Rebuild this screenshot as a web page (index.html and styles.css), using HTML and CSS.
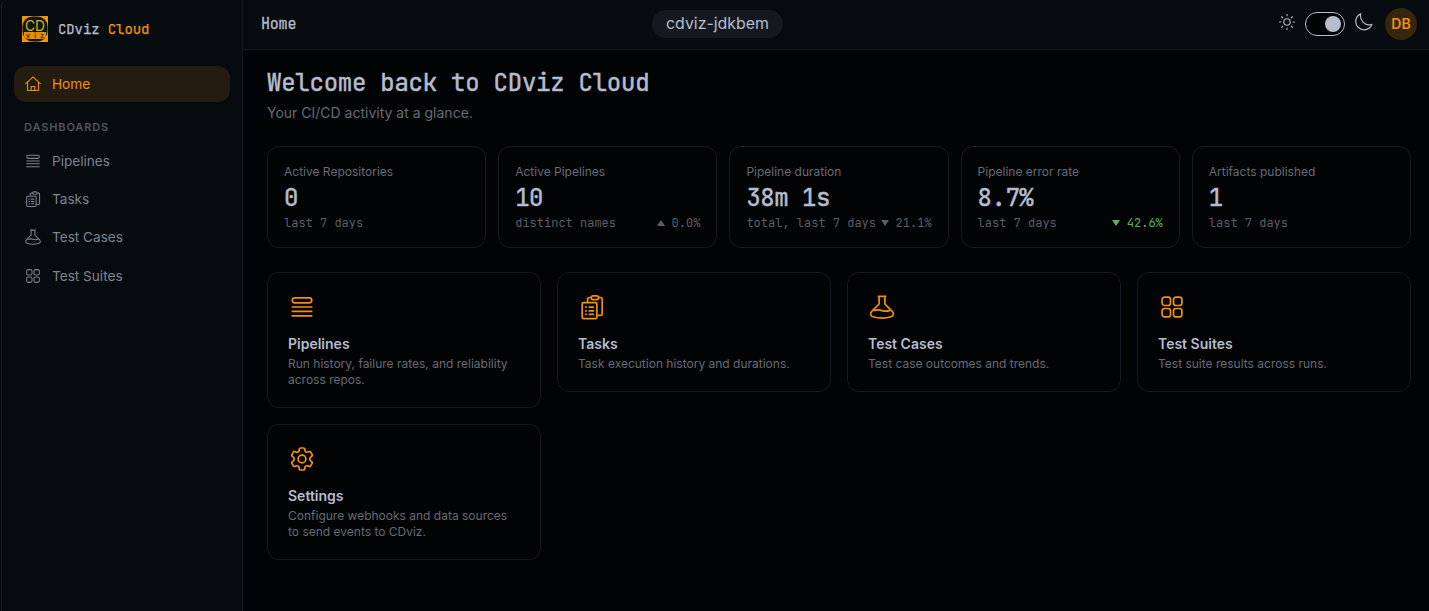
FILE: index.html
```html
<!DOCTYPE html>
<html lang="en">
<head>
    <meta charset="UTF-8">
    <meta name="viewport" content="width=device-width, initial-scale=1.0">
    <title>CDviz Cloud</title>
    <link rel="stylesheet" href="styles.css">
</head>
<body>
    <!-- shared icons -->
    <svg class="sprite" xmlns="http://www.w3.org/2000/svg">
        <symbol id="icon-home" viewBox="-1 -1 18 18">
            <path d="M.5 7.8 8 .9l7.5 6.9M2.5 6.5v8h11v-8M6.2 14.5v-4h3.6v4"/>
        </symbol>
        <symbol id="icon-pipelines" viewBox="0 0 28 28">
            <rect x="4.3" y="4.9" width="19.4" height="5" rx="2.3"/>
            <path d="M3.6 14h20.8M3.6 18.4h20.8M3.6 22.9h20.8"/>
        </symbol>
        <symbol id="icon-tasks" viewBox="0 0 28 28">
            <rect x="4.2" y="9.6" width="14.7" height="16" rx="1.3"/>
            <path d="M9.6 9.4V6.4q0-1.9 1.9-1.9h1.3M20.8 4.5h1.5q1.9 0 1.9 1.9v14.1q0 1.9-1.9 1.9h-3.2"/>
            <rect x="13.2" y="2.9" width="7.4" height="3.8" rx="1.9"/>
            <path d="M7.2 14.2h1.7M10.6 14.2h5.5M7.2 17.8h1.7M10.6 17.8h5.5M7.2 21.3h1.7M10.6 21.3h5.5"/>
        </symbol>
        <symbol id="icon-cases" viewBox="0 0 28 28">
            <path d="M9.7 3.3h8.6M11.1 3.6V11l-7.5 7.6c-1.6 1.8-1.2 4.4 1.3 5.2 5.8 1.8 12.4 1.8 18.2 0 2.5-.8 2.9-3.4 1.3-5.2L16.9 11V3.6"/>
            <path d="M6 17.8c3-1.3 5.700-1 8-.2s5.500.7 8-.2"/>
        </symbol>
        <symbol id="icon-suites" viewBox="0 0 28 28">
            <rect x="4.1" y="4.1" width="8.4" height="8.4" rx="2.5"/>
            <rect x="15.5" y="4.1" width="8.4" height="8.4" rx="2.5"/>
            <rect x="4.1" y="15.5" width="8.4" height="8.4" rx="2.5"/>
            <rect x="15.5" y="15.5" width="8.4" height="8.4" rx="2.5"/>
        </symbol>
        <symbol id="icon-settings" viewBox="0 0 28 28">
            <circle cx="14" cy="14" r="3.9"/>
            <path d="M12.3 3h3.4q.8 0 .9.8l.4 1.9q.2.9 1 1.3t1.7.1l1.6-.6q.8-.3 1.2.4l1.7 2.900q.4.7-.2 1.200l-1.300 1.200q-.9.7-.9 1.800t.9 1.800l1.300 1.200q.6.5.2 1.200l-1.700 2.900q-.4.7-1.200.4l-1.600-.6q-.9-.3-1.700.1t-1 1.300l-.4 1.900q-.1.8-.9.8h-3.400q-.8 0-.9-.8L11 22.300q-.2-.9-1-1.300t-1.700-.1l-1.600.6q-.8.3-1.200-.4l-1.700-2.900q-.4-.7.2-1.200l1.300-1.200q.9-.7.9-1.800t-.9-1.800L4 11q-.6-.5-.2-1.200l1.700-2.900q.4-.7 1.200-.4l1.600.6q.9.3 1.700-.1t1-1.300l.4-1.900q.1-.8.9-.8z"/>
        </symbol>
    </svg>

    <div class="app">
        <aside class="sidebar">
            <div class="brand">
                <svg class="logo" viewBox="0 0 26 26">
                    <rect width="26" height="26" fill="#f69400"/>
                    <rect x=".5" y=".5" width="25" height="25" rx="10" fill="#111510"/>
                    <path d="M2 16h22v5q-2 2-4 2H6q-2 0-4-2z" fill="#e58e04"/>
                    <text x="3" y="15" class="logo-cd" textLength="20" lengthAdjust="spacingAndGlyphs">CD</text>
                    <text x="4" y="21.5" class="logo-viz" textLength="18">viz</text>
                </svg>
                <span class="brand-name">CDviz <b>Cloud</b></span>
            </div>
            <nav class="nav">
                <a class="nav-item active"><svg class="nav-icon home-icon"><use href="#icon-home"/></svg>Home</a>
                <h2 class="nav-title">DASHBOARDS</h2>
                <a class="nav-item"><svg class="nav-icon"><use href="#icon-pipelines"/></svg>Pipelines</a>
                <a class="nav-item"><svg class="nav-icon"><use href="#icon-tasks"/></svg>Tasks</a>
                <a class="nav-item"><svg class="nav-icon"><use href="#icon-cases"/></svg>Test Cases</a>
                <a class="nav-item"><svg class="nav-icon"><use href="#icon-suites"/></svg>Test Suites</a>
            </nav>
        </aside>

        <div class="page">
            <header class="topbar">
                <span class="page-name">Home</span>
                <span class="workspace">cdviz-jdkbem</span>
                <div class="tools">
                    <svg class="sun" viewBox="0 0 16 16">
                        <circle cx="8" cy="8" r="3.2"/>
                        <path d="M8 0v2.3M8 13.7V16M0 8h2.3M13.7 8H16M2.3 2.3 4 4M12 12l1.7 1.7M2.3 13.7 4 12M12 4l1.7-1.7"/>
                    </svg>
                    <span class="switch"></span>
                    <svg class="moon" viewBox="0 0 18 18">
                        <path d="M5.7.9C4.4 6.8 9.3 13.3 16.8 11.5A8.3 8.3 0 1 1 5.7.9z"/>
                    </svg>
                    <span class="avatar">DB</span>
                </div>
            </header>

            <main class="content">
                <h1>Welcome back to CDviz Cloud</h1>
                <p class="subtitle">Your CI/CD activity at a glance.</p>

                <section class="stats">
                    <div class="stat">
                        <div class="stat-label">Active Repositories</div>
                        <div class="stat-value">0</div>
                        <div class="stat-note"><span>last 7 days</span></div>
                    </div>
                    <div class="stat">
                        <div class="stat-label">Active Pipelines</div>
                        <div class="stat-value">10</div>
                        <div class="stat-note"><span>distinct names</span><span class="trend up">0.0%</span></div>
                    </div>
                    <div class="stat">
                        <div class="stat-label">Pipeline duration</div>
                        <div class="stat-value">38m 1s</div>
                        <div class="stat-note"><span>total, last 7 days</span><span class="trend down">21.1%</span></div>
                    </div>
                    <div class="stat">
                        <div class="stat-label">Pipeline error rate</div>
                        <div class="stat-value">8.7%</div>
                        <div class="stat-note"><span>last 7 days</span><span class="trend down good">42.6%</span></div>
                    </div>
                    <div class="stat">
                        <div class="stat-label">Artifacts published</div>
                        <div class="stat-value">1</div>
                        <div class="stat-note"><span>last 7 days</span></div>
                    </div>
                </section>

                <section class="cards">
                    <a class="card">
                        <svg class="card-icon"><use href="#icon-pipelines"/></svg>
                        <h3>Pipelines</h3>
                        <p>Run history, failure rates, and reliability across repos.</p>
                    </a>
                    <a class="card">
                        <svg class="card-icon"><use href="#icon-tasks"/></svg>
                        <h3>Tasks</h3>
                        <p>Task execution history and durations.</p>
                    </a>
                    <a class="card">
                        <svg class="card-icon"><use href="#icon-cases"/></svg>
                        <h3>Test Cases</h3>
                        <p>Test case outcomes and trends.</p>
                    </a>
                    <a class="card">
                        <svg class="card-icon"><use href="#icon-suites"/></svg>
                        <h3>Test Suites</h3>
                        <p>Test suite results across runs.</p>
                    </a>
                    <a class="card">
                        <svg class="card-icon"><use href="#icon-settings"/></svg>
                        <h3>Settings</h3>
                        <p>Configure webhooks and data sources to send events to CDviz.</p>
                    </a>
                </section>
            </main>
        </div>
    </div>
</body>
</html>
```
FILE: styles.css
```css
:root {
    --bg: #020305;
    --panel: #060b0f;
    --border: #161a20;
    --text: #b5bdcc;
    --muted: #666b73;
    --dim: #5a5f66;
    --accent: #f29009;
    --mono: "JetBrains Mono", "DejaVu Sans Mono", monospace;
}

* {
    box-sizing: border-box;
}

body {
    margin: 0;
    background: var(--panel);
    color: var(--text);
    font-family: Inter, sans-serif;
    font-size: 14px;
}

h1, h2, h3, p {
    margin: 0;
}

svg {
    fill: none;
    stroke: currentColor;
    flex-shrink: 0;
}

.sprite {
    display: none;
}

.app {
    display: flex;
    height: 100vh;
    overflow: hidden;
}

/* Sidebar */
.sidebar {
    width: 242px;
    margin-left: 1px;
    border-left: 1px solid #1b1e22;
    border-right: 1px solid var(--border);
    border-top-left-radius: 6px;
    background: var(--panel);
}

.brand {
    display: flex;
    align-items: center;
    gap: 10px;
    padding: 16px 20px 0;
}

.logo {
    width: 26px;
    height: 26px;
    stroke: none;
}

.logo-cd {
    font: 15px Inter, sans-serif;
    fill: #d3b70c;
}

.logo-viz {
    font: bold 7px Inter, sans-serif;
    fill: #553c08;
}

.brand-name {
    font: 14px var(--mono);
    -webkit-text-stroke: 0.25px;
    letter-spacing: -0.1px;
}

.brand-name b {
    font-weight: normal;
    color: var(--accent);
}

.nav {
    padding: 24px 12px 0;
}

.nav-item {
    display: flex;
    align-items: center;
    gap: 10px;
    height: 36px;
    margin-bottom: 2.4px;
    padding: 0 10px 1px;
    border-radius: 12px;
    font-size: 13.6px;
    color: #7d848e;
}

.nav-item.active {
    margin-bottom: 0;
    background: #241c10;
    color: var(--accent);
}

.nav-icon {
    width: 18px;
    height: 18px;
    stroke-width: 1.6;
}

.home-icon {
    stroke-width: 1.1;
}

.nav-title {
    padding: 17px 10px 7px;
    font-size: 11px;
    font-weight: 600;
    line-height: 17px;
    letter-spacing: 0.88px;
    color: #50565d;
}

/* Top bar */
.page {
    flex: 1;
    display: flex;
    flex-direction: column;
    background: var(--bg);
}

.topbar {
    display: grid;
    grid-template-columns: 391px auto 1fr;
    align-items: center;
    height: 50px;
    padding: 0 12px 2px 18px;
    background: var(--panel);
    border-bottom: 1px solid var(--border);
}

.page-name {
    font: 15px var(--mono);
    -webkit-text-stroke: 0.3px;
    letter-spacing: -0.2px;
}

.workspace {
    padding: 0 14px;
    border-radius: 14px;
    background: #14191f;
    font-size: 15.9px;
    line-height: 28px;
}

.tools {
    display: flex;
    align-items: center;
    justify-content: flex-end;
}

.sun {
    width: 16px;
    height: 16px;
    margin: 0 10px 4px 0;
    stroke-width: 1.1;
}

.switch {
    width: 40px;
    height: 24px;
    padding: 3px;
    border: 1px solid var(--text);
    border-radius: 12px;
    background: var(--bg);
}

.switch::after {
    content: "";
    display: block;
    width: 16px;
    height: 16px;
    margin-left: auto;
    border-radius: 50%;
    background: var(--text);
}

.moon {
    width: 18px;
    height: 18px;
    margin: 0 12px 4px 10px;
    stroke-width: 1.2;
}

.avatar {
    width: 32px;
    height: 32px;
    border-radius: 50%;
    background: #36260f;
    color: var(--accent);
    font-weight: 600;
    line-height: 32px;
    text-align: center;
}

/* Content */
.content {
    padding: 16px 18px 0 24px;
}

h1 {
    font: 24px/34px var(--mono);
    -webkit-text-stroke: 0.5px;
    letter-spacing: -0.24px;
}

.subtitle {
    line-height: 20px;
    margin: 3px 0 23px;
    color: var(--muted);
}

.stats {
    display: grid;
    grid-template-columns: repeat(5, 1fr);
    gap: 12px;
    margin-bottom: 24px;
}

.stat {
    height: 102px;
    padding: 16px;
    border: 1px solid var(--border);
    border-radius: 12px;
}

.stat-label {
    font-size: 12px;
    line-height: 18px;
    color: var(--muted);
}

.stat-value {
    font: 24px/33px var(--mono);
    -webkit-text-stroke: 0.5px;
    letter-spacing: -0.48px;
}

.stat-note {
    display: flex;
    justify-content: space-between;
    font: 12px/18px var(--mono);
    white-space: nowrap;
    color: var(--dim);
}

.trend {
    display: flex;
    align-items: center;
    gap: 7px;
}

.trend::before {
    content: "";
    border: 4px solid transparent;
}

.up::before {
    border-top: 0;
    border-bottom: 6px solid;
}

.down::before {
    border-bottom: 0;
    border-top: 6px solid;
}

.good {
    color: #56b45c;
}

.cards {
    display: grid;
    grid-template-columns: repeat(4, 1fr);
    gap: 16px;
    align-items: start;
}

.card {
    padding: 20px 20px 19px;
    border: 1px solid var(--border);
    border-radius: 12px;
}

.card-icon {
    display: block;
    width: 28px;
    height: 28px;
    margin-bottom: 13px;
    stroke-width: 1.7;
    color: var(--accent);
}

.card h3 {
    font-size: 14px;
    font-weight: 600;
    line-height: 20px;
    margin-bottom: 2px;
}

.card p {
    font-size: 12px;
    line-height: 16px;
    color: var(--muted);
}
```
